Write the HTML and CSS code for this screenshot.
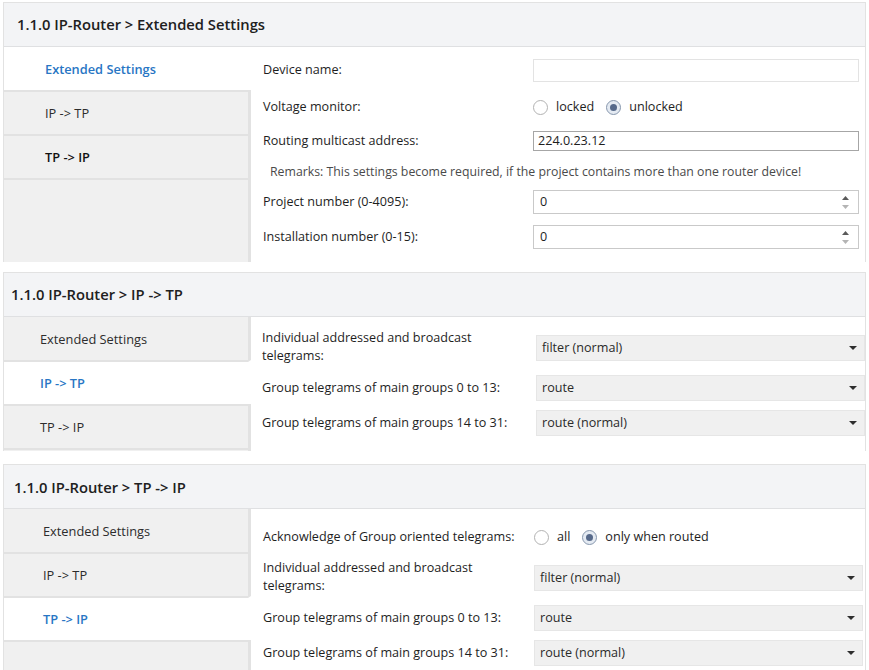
FILE: index.html
```html
<!DOCTYPE html>
<html lang="en">
<head>
<meta charset="utf-8">
<title>IP-Router settings</title>
<link rel="stylesheet" href="styles.css">
</head>
<body>
<div class="page">

  <section class="panel p1">
    <header class="panel-head">1.1.0 IP-Router &gt; Extended Settings</header>
    <div class="panel-body">
      <nav class="tabs">
        <div class="tab active">Extended Settings</div>
        <div class="tab">IP -&gt; TP</div>
        <div class="tab hover">TP -&gt; IP</div>
        <div class="tab-fill"></div>
      </nav>
      <div class="form">
        <div class="row first">
          <div class="lbl">Device name:</div>
          <div class="ctl"><div class="field light"></div></div>
        </div>
        <div class="row">
          <div class="lbl">Voltage monitor:</div>
          <div class="ctl radios">
            <span class="radio"></span><span class="rtext">locked</span>
            <span class="radio on"></span><span class="rtext">unlocked</span>
          </div>
        </div>
        <div class="row">
          <div class="lbl">Routing multicast address:</div>
          <div class="ctl"><div class="field dark short">224.0.23.12</div></div>
        </div>
        <div class="row remark">Remarks: This settings become required, if the project contains more than one router device!</div>
        <div class="row">
          <div class="lbl">Project number (0-4095):</div>
          <div class="ctl">
            <div class="field num"><span>0</span>
              <span class="spin">
                <svg class="up" width="7" height="4" viewBox="0 0 7 4"><path d="M0 4H7L3.5 0Z"/></svg>
                <svg class="down" width="7" height="4" viewBox="0 0 7 4"><path d="M0 0H7L3.5 4Z"/></svg>
              </span>
            </div>
          </div>
        </div>
        <div class="row last">
          <div class="lbl">Installation number (0-15):</div>
          <div class="ctl">
            <div class="field num"><span>0</span>
              <span class="spin">
                <svg class="up" width="7" height="4" viewBox="0 0 7 4"><path d="M0 4H7L3.5 0Z"/></svg>
                <svg class="down" width="7" height="4" viewBox="0 0 7 4"><path d="M0 0H7L3.5 4Z"/></svg>
              </span>
            </div>
          </div>
        </div>
      </div>
    </div>
  </section>

  <section class="panel p2">
    <header class="panel-head">1.1.0 IP-Router &gt; IP -&gt; TP</header>
    <div class="panel-body">
      <nav class="tabs">
        <div class="tab">Extended Settings</div>
        <div class="tab active">IP -&gt; TP</div>
        <div class="tab">TP -&gt; IP</div>
        <div class="tab-fill"></div>
      </nav>
      <div class="form">
        <div class="row">
          <div class="lbl two">Individual addressed and broadcast<br>telegrams:</div>
          <div class="ctl"><div class="select"><span>filter (normal)</span><svg width="8" height="4" viewBox="0 0 8 4"><path d="M0 0H8L4 4Z"/></svg></div></div>
        </div>
        <div class="row">
          <div class="lbl">Group telegrams of main groups 0 to 13:</div>
          <div class="ctl"><div class="select"><span>route</span><svg width="8" height="4" viewBox="0 0 8 4"><path d="M0 0H8L4 4Z"/></svg></div></div>
        </div>
        <div class="row">
          <div class="lbl">Group telegrams of main groups 14 to 31:</div>
          <div class="ctl"><div class="select"><span>route (normal)</span><svg width="8" height="4" viewBox="0 0 8 4"><path d="M0 0H8L4 4Z"/></svg></div></div>
        </div>
      </div>
    </div>
  </section>

  <section class="panel p3">
    <header class="panel-head">1.1.0 IP-Router &gt; TP -&gt; IP</header>
    <div class="panel-body">
      <nav class="tabs">
        <div class="tab">Extended Settings</div>
        <div class="tab">IP -&gt; TP</div>
        <div class="tab active">TP -&gt; IP</div>
        <div class="tab-fill"></div>
      </nav>
      <div class="form">
        <div class="row">
          <div class="lbl">Acknowledge of Group oriented telegrams:</div>
          <div class="ctl radios">
            <span class="radio"></span><span class="rtext">all</span>
            <span class="radio on"></span><span class="rtext">only when routed</span>
          </div>
        </div>
        <div class="row">
          <div class="lbl two">Individual addressed and broadcast<br>telegrams:</div>
          <div class="ctl"><div class="select"><span>filter (normal)</span><svg width="8" height="4" viewBox="0 0 8 4"><path d="M0 0H8L4 4Z"/></svg></div></div>
        </div>
        <div class="row">
          <div class="lbl">Group telegrams of main groups 0 to 13:</div>
          <div class="ctl"><div class="select"><span>route</span><svg width="8" height="4" viewBox="0 0 8 4"><path d="M0 0H8L4 4Z"/></svg></div></div>
        </div>
        <div class="row">
          <div class="lbl">Group telegrams of main groups 14 to 31:</div>
          <div class="ctl"><div class="select"><span>route (normal)</span><svg width="8" height="4" viewBox="0 0 8 4"><path d="M0 0H8L4 4Z"/></svg></div></div>
        </div>
      </div>
    </div>
  </section>

</div>
</body>
</html>
```

FILE: styles.css
```css
* { box-sizing: border-box; }

html, body { margin: 0; padding: 0; background: #ffffff; }

body {
  font-family: "Open Sans", "Noto Sans", "Liberation Sans", sans-serif;
  font-size: 12.6px;
  line-height: 18px;
  color: #1e1e1e;
  overflow: hidden;
}

.page {
  display: flex;
  flex-direction: column;
  padding-top: 2px;
}

.panel {
  margin-left: 3px;
  width: 863px;
  border: 1px solid #e2e2e2;
  border-bottom: none;
  background: #ffffff;
}

.p2 { margin-top: 10px; }
.p3 { margin-top: 13px; }

.panel-head {
  height: 44px;
  line-height: 43px;
  background: #f3f4f6;
  border-bottom: 1px solid #dfe0e2;
  font-size: 14.75px;
  font-weight: 600;
  color: #202020;
  padding-left: 13px;
}
.p2 .panel-head { padding-left: 7px; }
.p3 .panel-head { padding-left: 10px; line-height: 45px; }

.panel-body {
  display: flex;
  align-items: stretch;
}

/* left navigation */
.tabs {
  width: 247px;
  flex: none;
  display: flex;
  flex-direction: column;
}

.tab {
  height: 44px;
  display: flex;
  align-items: center;
  padding-left: 41px;
  background: #f0f0f0;
  border-right: 3px solid #e2e2e2;
  color: #2c2c2c;
  font-size: 12.8px;
}
.tab:first-child { height: 43px; }
.tab + .tab { border-top: 2px solid #e2e2e2; }

.tab.active {
  background: #ffffff;
  border-right-color: transparent;
  color: #2876c4;
  font-weight: 600;
}
.tab.hover {
  font-weight: 600;
  color: #111111;
}

.p2 .tab { padding-left: 36px; }
.p3 .tab { padding-left: 39px; }

.tab-fill {
  flex: 1;
  min-height: 3px;
  background: #f0f0f0;
  border-top: 2px solid #e2e2e2;
  border-right: 3px solid #e2e2e2;
}

/* form area */
.form {
  flex: 1;
  display: flex;
  flex-direction: column;
  gap: 8px;
  padding: 10px 6px 12px 12px;
}
.p1 .row.first { margin-bottom: 3px; }
.p1 .row.remark { margin-top: 1px; }
.p1 .row.last { margin-top: 1px; }

.p2 .form { padding: 12px 0 14px 11px; gap: 9px; }
.p3 .form { padding: 15px 2px 12px 12px; gap: 9px; }

.row {
  display: flex;
  align-items: center;
  min-height: 26px;
}

.lbl {
  width: 270px;
  flex: none;
  white-space: nowrap;
  color: #1e1e1e;
}
.lbl.two { padding-bottom: 1px; }
.p2 .lbl { width: 274px; }
.p3 .lbl { width: 271px; }

.ctl {
  flex: 1;
  display: flex;
  align-items: center;
}

.row.remark {
  min-height: 18px;
  padding-left: 7px;
  font-size: 12.3px;
  color: #4a4a4a;
  white-space: nowrap;
}

/* text fields */
.field {
  width: 100%;
  height: 24px;
  border: 1px solid #c9c9c9;
  background: #ffffff;
  display: flex;
  align-items: center;
  padding-left: 4px;
  color: #1e1e1e;
}
.field.light { border-color: #e3e3e3; height: 23px; }
.field.dark { border-color: #a6a6a6; }
.field.short { height: 20px; }

.field.num {
  padding-left: 6px;
  justify-content: space-between;
}

.spin {
  display: flex;
  flex-direction: column;
  align-items: center;
  gap: 5px;
  width: 20px;
  padding-right: 6px;
}
.spin .up { fill: #5a5a5a; }
.spin .down { fill: #b4b4b4; }

/* radios */
.radio {
  width: 15px;
  height: 15px;
  border-radius: 50%;
  border: 1px solid #b2b2b2;
  background: #ffffff;
  flex: none;
  position: relative;
}
.radio.on {
  border-color: #8797ad;
  background: #e4eaf2;
}
.radio.on::after {
  content: "";
  position: absolute;
  left: 3px;
  top: 3px;
  width: 7px;
  height: 7px;
  border-radius: 50%;
  background: #56698a;
}

.rtext {
  margin-left: 8px;
  margin-right: 12px;
  color: #1e1e1e;
}

/* dropdowns */
.select {
  width: 100%;
  height: 26px;
  background: #f0f0f0;
  border: 1px solid #e6e6e6;
  display: flex;
  align-items: center;
  justify-content: space-between;
  padding: 0 7px 0 5px;
  color: #2a2a2a;
}
.select svg { fill: #2e2e2e; }
```
